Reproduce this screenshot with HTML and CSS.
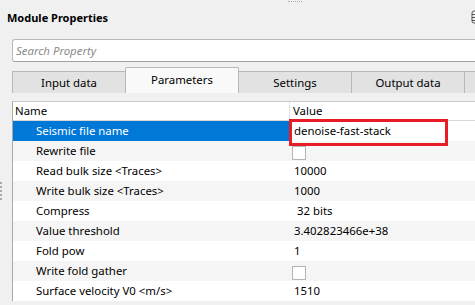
FILE: index.html
```html
<!DOCTYPE html>
<html lang="en">
<head>
    <meta charset="UTF-8">
    <link rel="stylesheet" href="styles.css">
    <title>Module Properties</title>
</head>
<body>
    <div class="panel">
        <div class="top-grip"></div>
        <div class="header">
            <span class="title">Module Properties</span>
            <svg class="header-icon" width="12" height="14" viewBox="0 0 12 14">
                <rect x="1" y="1" width="10" height="12" rx="2" fill="none" stroke="#555" stroke-width="1"/>
                <line x1="1" y1="4.5" x2="11" y2="4.5" stroke="#555"/>
                <line x1="1" y1="7.5" x2="11" y2="7.5" stroke="#555"/>
                <line x1="1" y1="10.5" x2="11" y2="10.5" stroke="#555"/>
            </svg>
        </div>

        <div class="body-area">
            <div class="side-grip"></div>
            <div class="main">
                <div class="search">Search Property</div>

                <div class="tabs">
                    <div class="tab">Input data</div>
                    <div class="tab active">Parameters</div>
                    <div class="tab">Settings</div>
                    <div class="tab">Output data</div>
                    <div class="tab"></div>
                </div>

                <div class="grid">
                    <div class="row head">
                        <div class="cell name">Name</div>
                        <div class="cell value">Value</div>
                    </div>
                    <div class="row selected">
                        <div class="cell name">Seismic file name</div>
                        <div class="cell value editor">denoise-fast-stack<div class="mark"></div></div>
                    </div>
                    <div class="row alt">
                        <div class="cell name">Rewrite file</div>
                        <div class="cell value"><span class="check"></span></div>
                    </div>
                    <div class="row">
                        <div class="cell name">Read bulk size &lt;Traces&gt;</div>
                        <div class="cell value">10000</div>
                    </div>
                    <div class="row alt">
                        <div class="cell name">Write bulk size &lt;Traces&gt;</div>
                        <div class="cell value">1000</div>
                    </div>
                    <div class="row">
                        <div class="cell name">Compress</div>
                        <div class="cell value">&nbsp;32 bits</div>
                    </div>
                    <div class="row alt">
                        <div class="cell name">Value threshold</div>
                        <div class="cell value">3.402823466e+38</div>
                    </div>
                    <div class="row">
                        <div class="cell name">Fold pow</div>
                        <div class="cell value">1</div>
                    </div>
                    <div class="row alt">
                        <div class="cell name">Write fold gather</div>
                        <div class="cell value"><span class="check"></span></div>
                    </div>
                    <div class="row">
                        <div class="cell name">Surface velocity V0 &lt;m/s&gt;</div>
                        <div class="cell value">1510</div>
                    </div>
                </div>
            </div>
        </div>
    </div>
</body>
</html>
```

FILE: styles.css
```css
body {
    margin: 0;
    background: #f0f0f0;
    font-family: "Noto Sans", "Open Sans", sans-serif;
    font-size: 11.4px;
    color: #000;
    overflow: hidden;
}

.panel {
    width: 520px;
    height: 305px;
    position: relative;
}

.top-grip {
    position: absolute;
    left: 288px;
    top: 1px;
    width: 14px;
    height: 1px;
    border-top: 1px dotted #b0b0b0;
}

.header {
    height: 39px;
    display: flex;
    align-items: center;
    padding-left: 7px;
    padding-right: 37px;
}

.title {
    font-weight: bold;
    font-size: 11px;
    flex: 1;
    margin-top: -4px;
}

.header-icon {
    margin-top: -5px;
}

.body-area {
    display: flex;
}

.side-grip {
    flex: none;
    width: 2px;
    margin-top: 143px;
    height: 18px;
    border-left: 2px dotted #a8a8a8;
    margin-right: 8px;
}

.main {
    flex: 1;
    min-width: 0;
}

.search {
    height: 21px;
    border: 1px solid #b9b9b9;
    border-bottom-color: #a0a0a0;
    border-radius: 3px 0 0 3px;
    border-right: none;
    background: #fff;
    color: #8a8a8a;
    font-style: italic;
    line-height: 21px;
    padding-left: 3px;
}

.tabs {
    display: flex;
    align-items: flex-end;
    height: 25px;
    margin-top: 6px;
}

.tab {
    flex: none;
    width: 112px;
    height: 21px;
    border: 1px solid #b8b8b8;
    border-bottom: none;
    border-right: none;
    background: #e2e2e2;
    text-align: center;
    line-height: 21px;
}

.tab.active {
    height: 25px;
    line-height: 23px;
    background: #f9f9f9;
    border-right: 1px solid #b8b8b8;
    border-radius: 2px 2px 0 0;
}

.tab.active + .tab {
    border-left: none;
}

.grid {
    margin-top: 8px;
    background: #fff;
    border-top: 1px solid #c8c8c8;
    border-left: 1px solid #a9a9a9;
}

.row {
    display: flex;
    height: 20px;
    background: #fff;
}

.row.alt {
    background: #f5f5f5;
}

.row.head {
    height: 18px;
    border-bottom: 1px solid #d6d6d6;
    background: #fff;
}

.cell {
    line-height: 20px;
    white-space: nowrap;
}

.cell.name {
    flex: none;
    width: 254px;
    padding-left: 23px;
}

.cell.value {
    flex: 1;
    padding-left: 4px;
    display: flex;
    align-items: center;
}

.row.head .cell {
    line-height: 18px;
}

.row.head .cell.name {
    padding-left: 2px;
    width: 274px;
    border-right: 1px solid #e0e0e0;
}

.row.head .cell.value {
    padding-left: 3px;
}

.row.selected .cell.name {
    background: #0078d7;
    color: #fff;
}

.editor {
    position: relative;
    background: #fff;
}

.mark {
    position: absolute;
    left: -1px;
    top: -2px;
    width: 153px;
    height: 21px;
    border: 3px solid #e81c24;
}

.check {
    display: inline-block;
    width: 12px;
    height: 12px;
    border: 1px solid #b4b4b4;
    background: #fff;
    margin-left: -2px;
    margin-top: 4px;
}
```
